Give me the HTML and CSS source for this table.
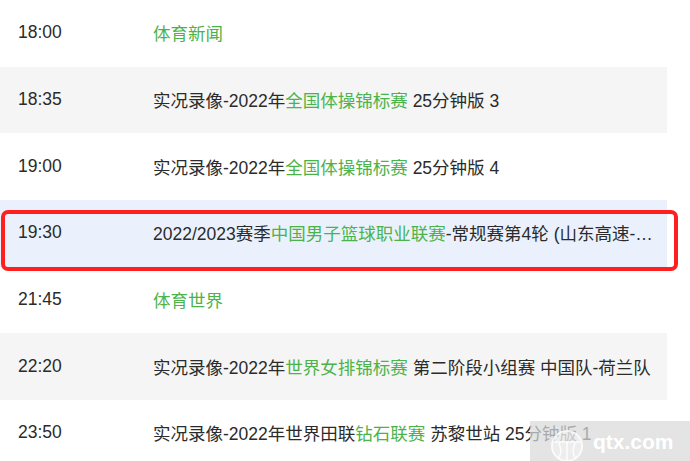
FILE: index.html
```html
<!DOCTYPE html>
<html lang="zh-CN">
<head>
<meta charset="utf-8">
<title>节目单</title>
<link rel="stylesheet" href="styles.css">
</head>
<body>
<ul class="schedule">
  <li class="row">
    <span class="time">18:00</span>
    <span class="title"><a class="lk">体育新闻</a></span>
  </li>
  <li class="row alt">
    <span class="time">18:35</span>
    <span class="title">实况录像-2022年<a class="lk">全国体操锦标赛</a> 25分钟版 3</span>
  </li>
  <li class="row">
    <span class="time">19:00</span>
    <span class="title">实况录像-2022年<a class="lk">全国体操锦标赛</a> 25分钟版 4</span>
  </li>
  <li class="row current">
    <span class="time">19:30</span>
    <span class="title">2022/2023赛季<a class="lk">中国男子篮球职业联赛</a>-常规赛第4轮 (山东高速-…</span>
    <span class="mark"></span>
  </li>
  <li class="row">
    <span class="time">21:45</span>
    <span class="title"><a class="lk">体育世界</a></span>
  </li>
  <li class="row alt">
    <span class="time">22:20</span>
    <span class="title">实况录像-2022年<a class="lk">世界女排锦标赛</a> 第二阶段小组赛 中国队-荷兰队</span>
  </li>
  <li class="row">
    <span class="time">23:50</span>
    <span class="title">实况录像-2022年世界田联<a class="lk">钻石联赛</a> 苏黎世站 25分钟版 1</span>
  </li>
</ul>
<div class="watermark">
  <svg class="wm-logo" width="34" height="34" viewBox="0 0 34 34" aria-hidden="true">
    <circle cx="17" cy="17" r="16" fill="#fff" opacity="0.35"/>
    <circle cx="17" cy="17" r="15" fill="none" stroke="#fff" stroke-width="2" opacity="0.7"/>
    <path d="M17 12 V32 M9 14 Q13 24 8 30 M25 14 Q21 24 26 30 M4 13 H30" fill="none" stroke="#fff" stroke-width="1.6" opacity="0.8"/>
  </svg>
  <span class="wm-text">qtx.com</span>
</div>
</body>
</html>
```
FILE: styles.css
```css
html, body {
  margin: 0;
  padding: 0;
  background: #fff;
}
body {
  font-family: "Liberation Sans", Arial, "Noto Sans CJK SC", sans-serif;
  font-size: 17.5px;
  color: #2b2b2b;
  overflow: hidden;
}
.schedule {
  list-style: none;
  margin: 0;
  padding: 0;
  width: 667px;
}
.row {
  position: relative;
  display: flex;
  align-items: center;
  height: 66.667px;
  padding-bottom: 1px;
  box-sizing: border-box;
}
.row.alt {
  background: #f5f5f5;
}
.row.current {
  background: #eaf1fc;
}
.time {
  flex: 0 0 135px;
  padding-left: 18px;
}
.title {
  flex: 1;
  min-width: 0;
  padding-right: 10px;
  white-space: nowrap;
}
.lk {
  color: #4cb34a;
  text-decoration: none;
}
.mark {
  position: absolute;
  left: 1px;
  top: 10px;
  width: 677px;
  height: 61px;
  box-sizing: border-box;
  border: 4px solid #ff1f1f;
  border-radius: 7px;
}
.watermark {
  position: absolute;
  left: 530px;
  top: 421px;
  width: 160px;
  height: 40px;
  background: rgba(218, 218, 218, 0.72);
  display: flex;
  align-items: center;
  gap: 9px;
  padding-left: 20px;
  box-sizing: border-box;
  overflow: hidden;
}
.wm-logo {
  flex: none;
  margin-top: 10px;
}
.wm-text {
  color: #fff;
  font-family: "Liberation Sans", Arial, sans-serif;
  font-size: 21px;
  font-weight: bold;
  margin-top: 2px;
}
```
